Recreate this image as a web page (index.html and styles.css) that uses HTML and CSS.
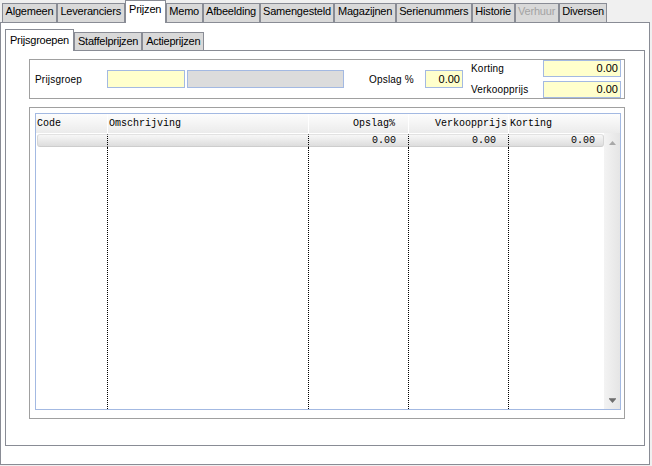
FILE: index.html
```html
<!DOCTYPE html>
<html>
<head>
<meta charset="utf-8">
<link rel="stylesheet" href="styles.css">
</head>
<body>
<div class="window">
  <div class="tabs">
    <div class="tab">Algemeen</div>
    <div class="tab">Leveranciers</div>
    <div class="tab active">Prijzen</div>
    <div class="tab">Memo</div>
    <div class="tab">Afbeelding</div>
    <div class="tab">Samengesteld</div>
    <div class="tab">Magazijnen</div>
    <div class="tab">Serienummers</div>
    <div class="tab">Historie</div>
    <div class="tab disabled">Verhuur</div>
    <div class="tab">Diversen</div>
  </div>
  <div class="pane">
    <div class="subtabs">
      <div class="subtab active">Prijsgroepen</div>
      <div class="subtab">Staffelprijzen</div>
      <div class="subtab">Actieprijzen</div>
    </div>
    <div class="subpane">
      <div class="group form">
        <span class="lbl lbl-prijsgroep">Prijsgroep</span>
        <div class="field code"></div>
        <div class="field name"></div>
        <span class="lbl lbl-opslag">Opslag %</span>
        <div class="field small">0.00</div>
        <div class="pair">
          <span class="lbl">Korting</span>
          <div class="field wide">0.00</div>
          <span class="lbl">Verkoopprijs</span>
          <div class="field wide">0.00</div>
        </div>
      </div>
      <div class="group list">
        <div class="grid">
          <div class="grid-head">
            <div class="hcell">Code</div>
            <div class="hcell">Omschrijving</div>
            <div class="hcell right pad13">Opslag%</div>
            <div class="hcell right">Verkoopprijs</div>
            <div class="hcell last">Korting</div>
          </div>
          <div class="grid-body">
            <div class="rows">
              <div class="cell first"></div>
              <div class="cell"></div>
              <div class="cell">0.00</div>
              <div class="cell">0.00</div>
              <div class="cell end">0.00</div>
              <div class="fill"></div>
              <div class="fill"></div>
              <div class="fill"></div>
              <div class="fill"></div>
              <div class="fill end"></div>
            </div>
            <div class="vscroll">
              <svg class="arrow" width="7" height="4" viewBox="0 0 7 4"><path d="M3.5 0 L7 4 L0 4 Z" fill="#a8a8a8"/></svg>
              <svg class="arrow" width="7" height="5" viewBox="0 0 7 5"><rect x="0" y="0" width="7" height="1" fill="#8a8a8a"/><path d="M0 1 L7 1 L3.5 5 Z" fill="#6e6e6e"/></svg>
            </div>
          </div>
        </div>
      </div>
    </div>
  </div>
</div>
</body>
</html>
```

FILE: styles.css
```css
* { box-sizing: border-box; }
html, body { margin: 0; }
body {
  background: #f0f0f0;
  width: 652px;
  height: 466px;
  overflow: hidden;
  font-family: "Liberation Sans", Arial, sans-serif;
  font-size: 11px;
  color: #000;
}
.window {
  width: 650px;
  height: 465px;
  display: flex;
  flex-direction: column;
}
.tabs {
  height: 22px;
  display: flex;
  align-items: flex-end;
  padding-left: 2px;
}
.tab {
  height: 19px;
  border: 1px solid #898c95;
  border-bottom: none;
  background: #d9d9d9;
  padding: 0 2.5px;
  line-height: 14px;
  letter-spacing: -0.2px;
  white-space: nowrap;
}
.tab.active {
  height: 23px;
  margin-bottom: -1px;
  background: #fff;
  padding: 0 3.5px;
  line-height: 17px;
  position: relative;
  z-index: 1;
}
.tab.disabled { color: #a3a3a3; }

.pane {
  height: 443px;
  border: 1px solid #898c95;
  background: #fff;
  padding: 0 4px 18px;
  display: flex;
  flex-direction: column;
}
.subtabs {
  height: 27px;
  flex: none;
  display: flex;
  align-items: flex-end;
}
.subtab {
  height: 18px;
  border: 1px solid #898c95;
  border-bottom: none;
  background: #d9d9d9;
  padding: 0 3px;
  line-height: 17px;
  letter-spacing: -0.23px;
  white-space: nowrap;
}
.subtab.active {
  height: 22px;
  margin-bottom: -1px;
  background: #fff;
  padding: 0 4px;
  line-height: 20px;
  position: relative;
  z-index: 1;
}
.subpane {
  flex: 1;
  border: 1px solid #898c95;
  padding: 8px 19px 26px 23px;
  display: flex;
  flex-direction: column;
  gap: 8px;
}
.group { border: 1px solid #a0a0a0; }
.group.form {
  height: 40px;
  flex: none;
  display: flex;
  align-items: center;
  padding: 0 3px 0 5px;
}
.lbl {
  font-size: 10px;
  letter-spacing: 0.2px;
  white-space: nowrap;
}
.lbl-prijsgroep { width: 72px; }
.lbl-opslag { width: 56px; margin-left: 25px; }
.field {
  height: 18px;
  border: 1px solid #a3b9e2;
  background: #ffffcc;
  text-align: right;
  padding-right: 2px;
  line-height: 16px;
}
.field.code { width: 78px; }
.field.name { width: 157px; margin-left: 2px; background: #dcdcdc; }
.field.small { width: 38px; }
.pair {
  margin-left: 8px;
  align-self: stretch;
  display: grid;
  grid-template-columns: 72px 78px;
  grid-template-rows: 17px 17px;
  row-gap: 4px;
  align-items: center;
}
.pair .field { height: 17px; line-height: 15px; }

.group.list {
  flex: 1;
  display: flex;
  padding: 5px 3px 8px 5px;
}
.grid {
  flex: 1;
  border: 1px solid #a3b9e2;
  display: flex;
  flex-direction: column;
  font-family: "Liberation Mono", "Courier New", monospace;
  font-size: 10px;
}
.grid-head {
  height: 19px;
  flex: none;
  display: grid;
  grid-template-columns: 72px 201px 100px 100px 1fr;
  background: linear-gradient(#fdfdfd, #ebebeb);
}
.hcell {
  border-right: 1px solid #ffffff;
  line-height: 19px;
  padding: 0 1px;
  white-space: nowrap;
}
.hcell.right { text-align: right; }
.hcell.pad13 { padding-right: 13px; }
.hcell.last { border-right: none; }
.grid-body {
  flex: 1;
  display: flex;
}
.rows {
  flex: 1;
  display: grid;
  grid-template-columns: 72px 201px 100px 100px 1fr;
  grid-template-rows: 13px 1fr;
  padding-top: 1px;
}
.cell {
  background: linear-gradient(#f7f7f7, #dddddd);
  border-top: 1px solid #e2e2e2;
  border-bottom: 1px solid #cdcdcd;
  border-right: 1px dotted #000;
  text-align: right;
  padding-right: 12px;
  line-height: 11px;
}
.cell.first {
  margin-left: 1px;
  border-left: 1px solid #d6d6d6;
  border-radius: 3px 0 0 3px;
}
.cell.end {
  border-right: 1px solid #d6d6d6;
  border-radius: 0 3px 3px 0;
  padding-right: 8px;
}
.fill { border-right: 1px dotted #000; }
.fill.end { border-right: none; }
.vscroll {
  width: 16px;
  flex: none;
  background: linear-gradient(90deg, #f3f3f3, #e5e5e5);
  display: flex;
  flex-direction: column;
  justify-content: space-between;
  align-items: center;
  padding: 8px 0 6px;
}
.arrow { display: block; }
```
